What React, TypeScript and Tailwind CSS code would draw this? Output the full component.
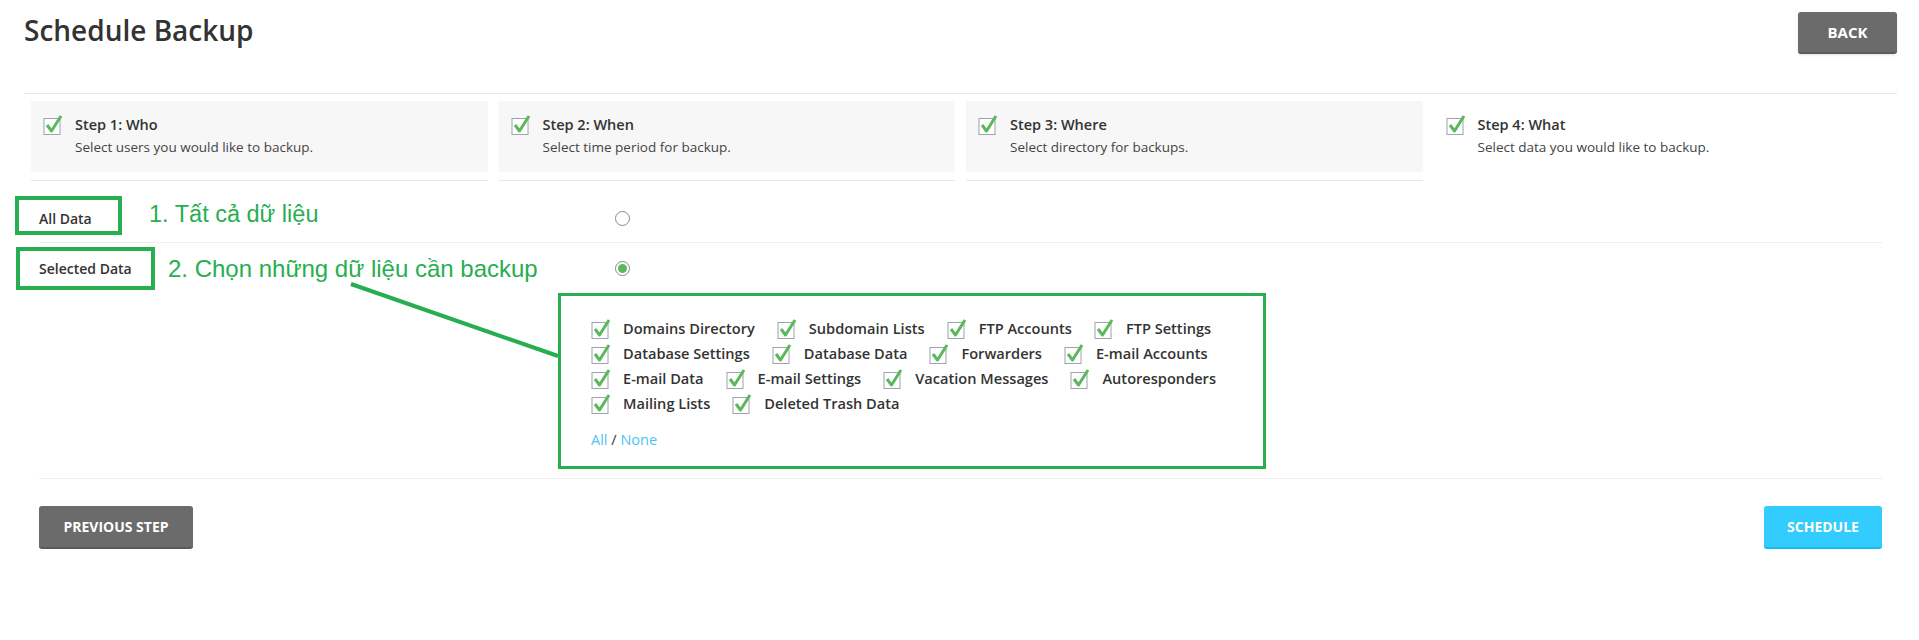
import React from "react";

const Check = ({ size = 22 }: { size?: number }) => (
  <svg width={size} height={size} viewBox="0 0 22 22" className="shrink-0">
    <rect x="1" y="4.5" width="16" height="16" fill="white" stroke="#9ca3af" strokeWidth="1" />
    <path d="M4 11 L8.5 17 L18 2" fill="none" stroke="#5cb85c" strokeWidth="3" strokeLinejoin="round" />
  </svg>
);

const rows = [
  ["Domains Directory", "Subdomain Lists", "FTP Accounts", "FTP Settings"],
  ["Database Settings", "Database Data", "Forwarders", "E-mail Accounts"],
  ["E-mail Data", "E-mail Settings", "Vacation Messages", "Autoresponders"],
  ["Mailing Lists", "Deleted Trash Data"],
];

const steps = [
  ["Step 1: Who", "Select users you would like to backup."],
  ["Step 2: When", "Select time period for backup."],
  ["Step 3: Where", "Select directory for backups."],
  ["Step 4: What", "Select data you would like to backup."],
];

export default function App() {
  return (
    <div className="relative w-[1919px] h-[640px] bg-white text-[#333] overflow-hidden" style={{ fontFamily: '"Open Sans", sans-serif' }}>
      <div className="pl-[24px] pr-[22px]">
        <div className="flex items-start justify-between pt-[12px] h-[93px]">
          <h1 className="text-[28px] font-semibold text-[#333] mt-[4px] leading-none">Schedule Backup</h1>
          <button className="w-[99px] h-[42px] rounded-[3px] bg-[#6b6b6b] border-b-2 border-[#5a5a5a] text-white font-bold text-[15px] shadow">BACK</button>
        </div>
        <div className="border-t border-[#e8e8e8] pt-[7px] px-[7px] grid grid-cols-4 gap-[11px]">
          {steps.map(([t, s], i) => (
            <div key={t} className={i < 3 ? "border-b border-[#e8e8e8] pb-[8px]" : ""}>
              <div className={`h-[71px] px-[12px] pt-[13px] ${i < 3 ? "bg-[#f7f7f7]" : ""}`}>
                <div className="flex items-center gap-[10px]">
                  <Check />
                  <span className="font-semibold text-[14.5px] text-[#333]">{t}</span>
                </div>
                <div className="pl-[32px] text-[13.5px] text-[#444] mt-[1px]">{s}</div>
              </div>
            </div>
          ))}
        </div>
      </div>
      <div className="pl-[39px] pr-[37px]">
        <div className="flex items-center h-[62px] border-b border-[#eee] pt-[14px]">
          <div className="w-[576px] text-[14px] font-semibold">All Data</div>
          <span className="w-[15px] h-[15px] rounded-full border border-[#888] bg-white" />
        </div>
        <div className="flex items-center h-[50px]">
          <div className="w-[576px] text-[14px] font-semibold">Selected Data</div>
          <span className="w-[15px] h-[15px] rounded-full border border-[#888] flex items-center justify-center">
            <span className="w-[9px] h-[9px] rounded-full bg-[#5cb85c]" />
          </span>
        </div>
        <div className="ml-[519px] w-[708px] h-[176px] border-[3px] border-[#27ae50] pl-[30px] pt-[22px]">
          <div className="flex flex-col gap-[3px]">
            {rows.map((r, i) => (
              <div key={i} className="flex gap-[22px]">
                {r.map((x) => (
                  <div key={x} className="flex items-center gap-[10px] h-[22px]">
                    <Check />
                    <span className="text-[14.6px] font-semibold text-[#333]">{x}</span>
                  </div>
                ))}
              </div>
            ))}
          </div>
          <div className="mt-[14px] text-[14.5px]">
            <span className="text-[#4fc3f7]">All</span> <span className="text-[#333]">/</span> <span className="text-[#4fc3f7]">None</span>
          </div>
        </div>
        <div className="border-b border-[#eee] mt-[9px]" />
        <div className="flex justify-between mt-[27px]">
          <button className="w-[154px] h-[43px] rounded-[3px] bg-[#6b6b6b] border-b-2 border-[#5a5a5a] text-white font-bold text-[14px]">PREVIOUS STEP</button>
          <button className="w-[118px] h-[43px] rounded-[3px] bg-[#33ccff] border-b-2 border-[#1ab8f0] text-white font-bold text-[14px]">SCHEDULE</button>
        </div>
      </div>

      {/* annotations */}
      <div className="absolute left-[15px] top-[196px] w-[107px] h-[39px] border-[4px] border-[#27ae50]" />
      <div className="absolute left-[16px] top-[247px] w-[139px] h-[43px] border-[4px] border-[#27ae50]" />
      <div className="absolute left-[149px] top-[197px] text-[23.5px] text-[#27ae50]" style={{ fontFamily: '"Liberation Sans", Arial, sans-serif' }}>1. Tất cả dữ liệu</div>
      <div className="absolute left-[168px] top-[251px] text-[24px] text-[#27ae50]" style={{ fontFamily: '"Liberation Sans", Arial, sans-serif' }}>2. Chọn những dữ liệu cần backup</div>
      <svg className="absolute left-0 top-0" width="1919" height="640" style={{ pointerEvents: "none" }}>
        <line x1="351" y1="284" x2="558" y2="356" stroke="#27ae50" strokeWidth="4" />
      </svg>
    </div>
  );
}
